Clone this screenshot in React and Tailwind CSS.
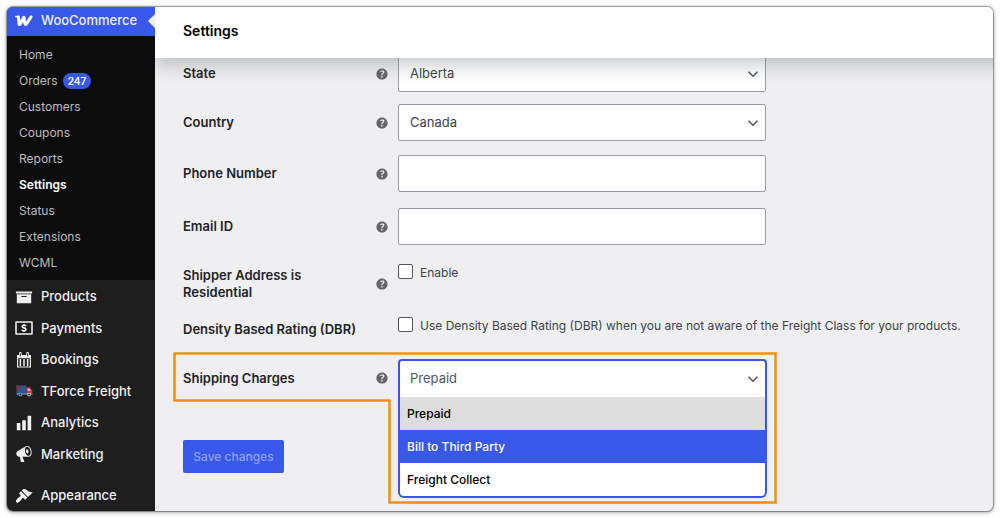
import React, { useState } from 'react';

const submenu = [
  { label: 'Home' },
  { label: 'Orders', badge: 247 },
  { label: 'Customers' },
  { label: 'Coupons' },
  { label: 'Reports' },
  { label: 'Settings', active: true },
  { label: 'Status' },
  { label: 'Extensions' },
  { label: 'WCML' },
];

const chargeOptions = ['Prepaid', 'Bill to Third Party', 'Freight Collect'];

function WooIcon() {
  return (
    <svg viewBox="0 0 18 12" className="w-[18px] h-3" fill="none" stroke="#fff" strokeLinecap="round" strokeLinejoin="round">
      <path d="M1 1.6H3.4" strokeWidth="1.8" />
      <path d="M3.5 2L4 8.8Q4.2 10.2 5.2 9L8.8 2.6" strokeWidth="3.1" />
      <path d="M8.9 2.4Q9 7 10.2 9Q10.8 9.8 11.4 8.9L16 2" strokeWidth="3.1" />
    </svg>
  );
}

function ArchiveIcon() {
  return (
    <svg viewBox="0 0 20 20" className="w-[18px] h-[18px]" fill="#f0f0f1">
      <path d="M19 4v2H1V4h18zM2 7h16v10H2V7zm11 3V9H7v1h6z" />
    </svg>
  );
}

function PaymentsIcon() {
  return (
    <svg viewBox="0 0 18 14" className="w-[18px] h-3.5" fill="none" stroke="#f0f0f1">
      <rect x="1" y="1" width="16" height="12" rx="0.5" strokeWidth="1.6" />
      <path d="M11 5.1Q10.6 4.2 9 4.2Q7.2 4.2 7.2 5.5Q7.2 6.6 9 6.9Q10.9 7.3 10.9 8.5Q10.9 9.8 9 9.8Q7.3 9.8 6.9 8.8M9 3v1.2M9 9.8V11" strokeWidth="1.6" />
    </svg>
  );
}

function CalendarIcon() {
  return (
    <svg viewBox="0 0 16 16" className="w-4 h-4">
      <path fill="#f0f0f1" fillRule="evenodd" d="M1 3h2V1.4a1.4 1.4 0 0 1 2.8 0V3h4.4V1.4a1.4 1.4 0 0 1 2.8 0V3h2v12.5H1zM2.2 6.3v8.2h11.6V6.3z" />
      <path stroke="#f0f0f1" strokeWidth="1.5" d="M4.4 7v7M8 7v7M11.6 7v7" />
      <path stroke="#1e1e1e" strokeWidth="1" d="M4.4 1.2v3M11.6 1.2v3" />
    </svg>
  );
}

function TruckIcon() {
  return (
    <svg viewBox="0 0 17 12" className="w-[17px] h-3">
      <path fill="#2d558f" d="M.5.5h9.8v8.8H.5z" />
      <path fill="#7d3148" d="M.5.5h4v4h-4z" />
      <path fill="#c93a45" d="M10.5 2.3h3.3l2.4 3.2v3.8h-5.7z" />
      <path fill="#b9c8dc" d="M11.6 3.4h1.7l1.7 2.3h-3.4z" />
      <path fill="#7d97b8" d="M.5 8.4h16v1.2H.5z" />
      <circle cx="4.4" cy="9.6" r="1.9" fill="#6f8db5" />
      <circle cx="4.4" cy="9.6" r=".8" fill="#1e1e1e" />
      <circle cx="13" cy="9.6" r="1.9" fill="#a9b9cd" />
      <circle cx="13" cy="9.6" r=".8" fill="#1e1e1e" />
    </svg>
  );
}

function ChartIcon() {
  return (
    <svg viewBox="0 0 20 20" className="w-[18px] h-[18px]" fill="#f0f0f1">
      <path d="M18 18V2h-4v16h4zm-6 0V7H8v11h4zm-6 0v-8H2v8h4z" />
    </svg>
  );
}

function MegaphoneIcon() {
  return (
    <svg viewBox="0 0 20 20" className="w-[18px] h-[18px]" fill="#f0f0f1">
      <path d="M18.15 5.94c.46 1.62.38 3.22-.02 4.48-.42 1.28-1.26 2.18-2.3 2.48-.16.06-.26.06-.4.06-.06.02-.12.02-.18.02-.06.02-.14.02-.22.02h-6.8l2.22 5.5c.02.14-.06.26-.14.34-.08.1-.24.16-.34.16H6.95c-.1 0-.26-.06-.34-.16-.08-.08-.16-.2-.14-.34l-1-5.5H4.25l-.02-.02c-.5.06-1.08-.18-1.54-.62s-.88-1.08-1.06-1.88c-.24-.8-.2-1.56-.02-2.2.18-.62.58-1.08 1.06-1.3l.02-.02 9-5.4c.1-.06.18-.1.24-.16.06-.04.14-.08.24-.12.16-.08.28-.12.5-.18 1.04-.3 2.24.1 3.22.98s1.84 2.24 2.26 3.86zm-2.58 5.98h-.02c.4-.1.74-.34 1.04-.7.58-.7.86-1.76.86-3.04 0-.64-.1-1.3-.28-1.98-.34-1.36-1.02-2.5-1.78-3.24s-1.68-1.1-2.46-.88c-.82.22-1.4.96-1.7 2-.32 1.04-.28 2.36.06 3.72.38 1.36 1 2.5 1.8 3.24.78.74 1.62 1.1 2.48.88zm-2.54-7.08c.22-.04.42-.02.62.04.38.16.76.48 1.02 1s.42 1.2.42 1.78c0 .3-.04.56-.12.8-.18.48-.44.84-.86.94-.34.1-.8-.06-1.14-.4s-.64-.86-.78-1.5c-.18-.62-.12-1.24.02-1.72s.48-.84.82-.94z" />
    </svg>
  );
}

function BrushIcon() {
  return (
    <svg viewBox="0 0 20 20" className="w-[18px] h-[18px]" fill="#f0f0f1">
      <path d="M14.48 11.06L7.41 3.99l1.5-1.5c.5-.56 2.3-.47 3.51.32 1.21.8 1.43 1.28 2.91 2.1 1.18.64 2.45 1.26 4.45.85zm-.71.71L6.7 4.7 4.93 6.47c-.39.39-.39 1.02 0 1.41l1.06 1.06c.39.39.39 1.03 0 1.42-.6.6-1.43 1.11-2.21 1.69-.35.26-.7.53-1.01.84C1.43 14.23.4 16.08 1.4 17.07c.99 1 2.84-.03 4.18-1.36.31-.31.58-.66.85-1.02.57-.78 1.08-1.61 1.69-2.21.39-.39 1.02-.39 1.41 0l1.06 1.06c.39.39 1.02.39 1.41 0z" />
    </svg>
  );
}

function HelpIcon() {
  return (
    <svg viewBox="0 0 20 20" className="w-4 h-4 shrink-0" fill="#666" aria-hidden="true">
      <path d="M17 10c0-3.87-3.14-7-7-7-3.87 0-7 3.13-7 7s3.13 7 7 7c3.86 0 7-3.13 7-7zm-6.3 1.48H9.14v-.43c0-.38.08-.7.24-.98s.46-.57.88-.89c.41-.29.68-.53.81-.71.14-.18.2-.39.2-.62 0-.25-.09-.44-.28-.58-.19-.13-.45-.19-.79-.19-.58 0-1.25.15-2 .45l-.64-1.28c.87-.49 1.8-.74 2.77-.74.81 0 1.45.2 1.92.58.48.39.71.91.71 1.55 0 .43-.09.8-.29 1.11-.19.32-.57.67-1.11 1.06-.38.28-.61.49-.71.63-.1.15-.15.34-.15.57v.47zm-1.47 2.74c-.18-.17-.27-.42-.27-.73 0-.33.08-.58.26-.75s.43-.25.77-.25c.32 0 .57.09.75.26s.27.42.27.74c0 .3-.09.55-.27.72-.18.18-.43.27-.75.27-.33 0-.58-.09-.76-.26z" />
    </svg>
  );
}

function Chevron({ className = 'right-[7px]' }) {
  return (
    <svg viewBox="0 0 12 12" className={`absolute top-1/2 -mt-1.5 w-3 h-3 pointer-events-none ${className}`} fill="none" stroke="#50575e" strokeWidth="1.6">
      <path d="M1.5 3.8L6 8.2L10.5 3.8" />
    </svg>
  );
}

const mainMenu = [
  { label: 'Products', icon: <ArchiveIcon /> },
  { label: 'Payments', icon: <PaymentsIcon /> },
  { label: 'Bookings', icon: <CalendarIcon /> },
  { label: 'TForce Freight', icon: <TruckIcon /> },
  { label: 'Analytics', icon: <ChartIcon /> },
  { label: 'Marketing', icon: <MegaphoneIcon /> },
];

function MenuLink({ icon, children, className = '' }) {
  return (
    <a href="#" className={`flex items-center pl-2 text-[13px] font-medium text-[#f0f0f1] ${className}`}>
      <span className="w-[18px] mr-2 flex justify-center shrink-0">{icon}</span>
      {children}
    </a>
  );
}

function Sidebar() {
  return (
    <nav className="relative z-20 w-[148px] shrink-0 bg-[#1e1e1e] flex flex-col">
      <div className="relative bg-[#3858e9]">
        <MenuLink icon={<WooIcon />} className="h-[29px] pb-0.5">WooCommerce</MenuLink>
        <span className="absolute right-0 top-1/2 -mt-2 border-y-[7px] border-r-[7px] border-y-transparent border-r-[#f0f0f1]" />
      </div>

      <ul className="bg-[#0c0c0c] pt-1.5 pb-1">
        {submenu.map((item) => (
          <li key={item.label}>
            <a
              href="#"
              className={`flex items-center h-[26px] pl-3 text-xs ${
                item.active ? 'font-semibold text-white' : 'text-[#bcbcbd]'
              }`}
            >
              {item.label}
              {item.badge && (
                <span className="ml-[5px] px-[5px] h-4 rounded-full bg-[#3858e9] text-white text-[10px] leading-4 font-semibold">
                  {item.badge}
                </span>
              )}
            </a>
          </li>
        ))}
      </ul>

      <div className="h-[190px] pt-px flex flex-col">
        {mainMenu.map((item) => (
          <MenuLink key={item.label} icon={item.icon} className="flex-1">{item.label}</MenuLink>
        ))}
      </div>
      <MenuLink icon={<BrushIcon />} className="mt-2.5 h-[31px]">Appearance</MenuLink>
    </nav>
  );
}

function Row({ id, label, help = true, className = '', labelClass = 'items-center', children }) {
  return (
    <div className={`flex ${className}`}>
      <div className={`flex w-[215px] shrink-0 pr-2 ${labelClass}`}>
        <label htmlFor={id} className="flex-1 pr-12 text-[13px] leading-[17px] font-semibold text-[#1d2327]">
          {label}
        </label>
        {help && <HelpIcon />}
      </div>
      {children}
    </div>
  );
}

const fieldClass =
  'block w-full h-[37px] px-[11px] text-[13px] text-[#3c434a] bg-white border border-[#979ea8] rounded-xs appearance-none outline-none';

function SelectField({ id, value }) {
  return (
    <div className="relative w-full max-w-[368px]">
      <select id={id} defaultValue={value} className={fieldClass}>
        <option>{value}</option>
      </select>
      <Chevron />
    </div>
  );
}

function CheckField({ id, children }) {
  return (
    <div className="flex items-start">
      <input
        id={id}
        type="checkbox"
        className="w-[15px] h-[15px] shrink-0 appearance-none bg-white border border-[#50575e] rounded-xs checked:bg-[#3858e9]"
      />
      <label htmlFor={id} className="ml-[7px] text-xs leading-[17px] text-[#3c434a]">{children}</label>
    </div>
  );
}

export default function App() {
  const [charge, setCharge] = useState('Prepaid');

  return (
    <div className="p-[7px] bg-white font-['Inter',sans-serif]">
      <div className="flex rounded-md overflow-hidden bg-[#efeff1] shadow-[0_0_1px_1px_rgba(0,0,0,0.35),0_1px_5px_rgba(0,0,0,0.4)]">
        <Sidebar />

        <main className="flex-1 min-w-0 overflow-hidden">
          <header className="relative z-10 h-[51px] -mr-6 pl-7 pb-[3px] flex items-center bg-white shadow-[0_8px_16px_0_rgba(85,93,102,0.3)]">
            <h1 className="text-sm font-semibold text-black">Settings</h1>
          </header>

          {/* The first row is scrolled partly under the header */}
          <form className="pl-7 -mt-[3px]" onSubmit={(e) => e.preventDefault()}>
            <Row id="state" label="State">
              <SelectField id="state" value="Alberta" />
            </Row>
            <Row id="country" label="Country" className="mt-3">
              <SelectField id="country" value="Canada" />
            </Row>
            <Row id="phone" label="Phone Number" className="mt-3.5">
              <div className="w-full max-w-[368px]">
                <input id="phone" type="text" className={fieldClass} />
              </div>
            </Row>
            <Row id="email" label="Email ID" className="mt-4">
              <div className="w-full max-w-[368px]">
                <input id="email" type="text" className={fieldClass} />
              </div>
            </Row>
            <Row id="residential" label="Shipper Address is Residential" className="mt-[19px]" labelClass="items-center pt-[3px]">
              <CheckField id="residential">Enable</CheckField>
            </Row>
            <Row id="dbr" label="Density Based Rating (DBR)" help={false} className="mt-4 [&_label]:pr-0" labelClass="items-start pt-1">
              <CheckField id="dbr">
                Use Density Based Rating (DBR) when you are not aware of the Freight Class for your products.
              </CheckField>
            </Row>

            <Row id="charges" label="Shipping Charges" className="relative mt-[21px]" labelClass="items-center">
              <div className="relative z-10 w-full max-w-[369px] border-2 border-b-0 border-[#3858e9] rounded-t bg-white">
                <select
                  id="charges"
                  value={charge}
                  onChange={(e) => setCharge(e.target.value)}
                  className="block w-full h-9 px-2.5 text-[13px] text-[#50575e] bg-transparent appearance-none outline-none"
                >
                  {chargeOptions.map((option) => (
                    <option key={option}>{option}</option>
                  ))}
                </select>
                <Chevron className="right-1.5" />
                <ul role="listbox" aria-label="Shipping Charges" className="absolute top-full -inset-x-0.5 border-2 border-t-0 border-[#3858e9] rounded-b-md overflow-hidden bg-white">
                  {chargeOptions.map((option) => (
                    <li
                      key={option}
                      role="option"
                      aria-selected={option === charge}
                      onClick={() => setCharge(option)}
                      className={`flex items-center h-[33px] px-[7px] text-xs font-medium ${
                        option === 'Bill to Third Party'
                          ? 'bg-[#3858e9] text-white'
                          : option === charge
                            ? 'bg-[#ddd] text-black'
                            : 'text-black'
                      }`}
                    >
                      {option}
                    </li>
                  ))}
                </ul>
              </div>
              <svg viewBox="0 0 604 152" className="absolute -left-2.5 -top-[7px] w-[604px] h-[152px] pointer-events-none" fill="none" stroke="#f29111" strokeWidth="2.5">
                <path d="M1.5 1.5H602.5V150.5H216.5V48.5H1.5Z" />
              </svg>
            </Row>

            <button type="submit" disabled className="mt-[43px] h-[33px] w-[101px] rounded-xs bg-[#3858e9] text-xs font-medium text-[#8f9ff3]">
              Save changes
            </button>
          </form>
        </main>
      </div>
    </div>
  );
}
